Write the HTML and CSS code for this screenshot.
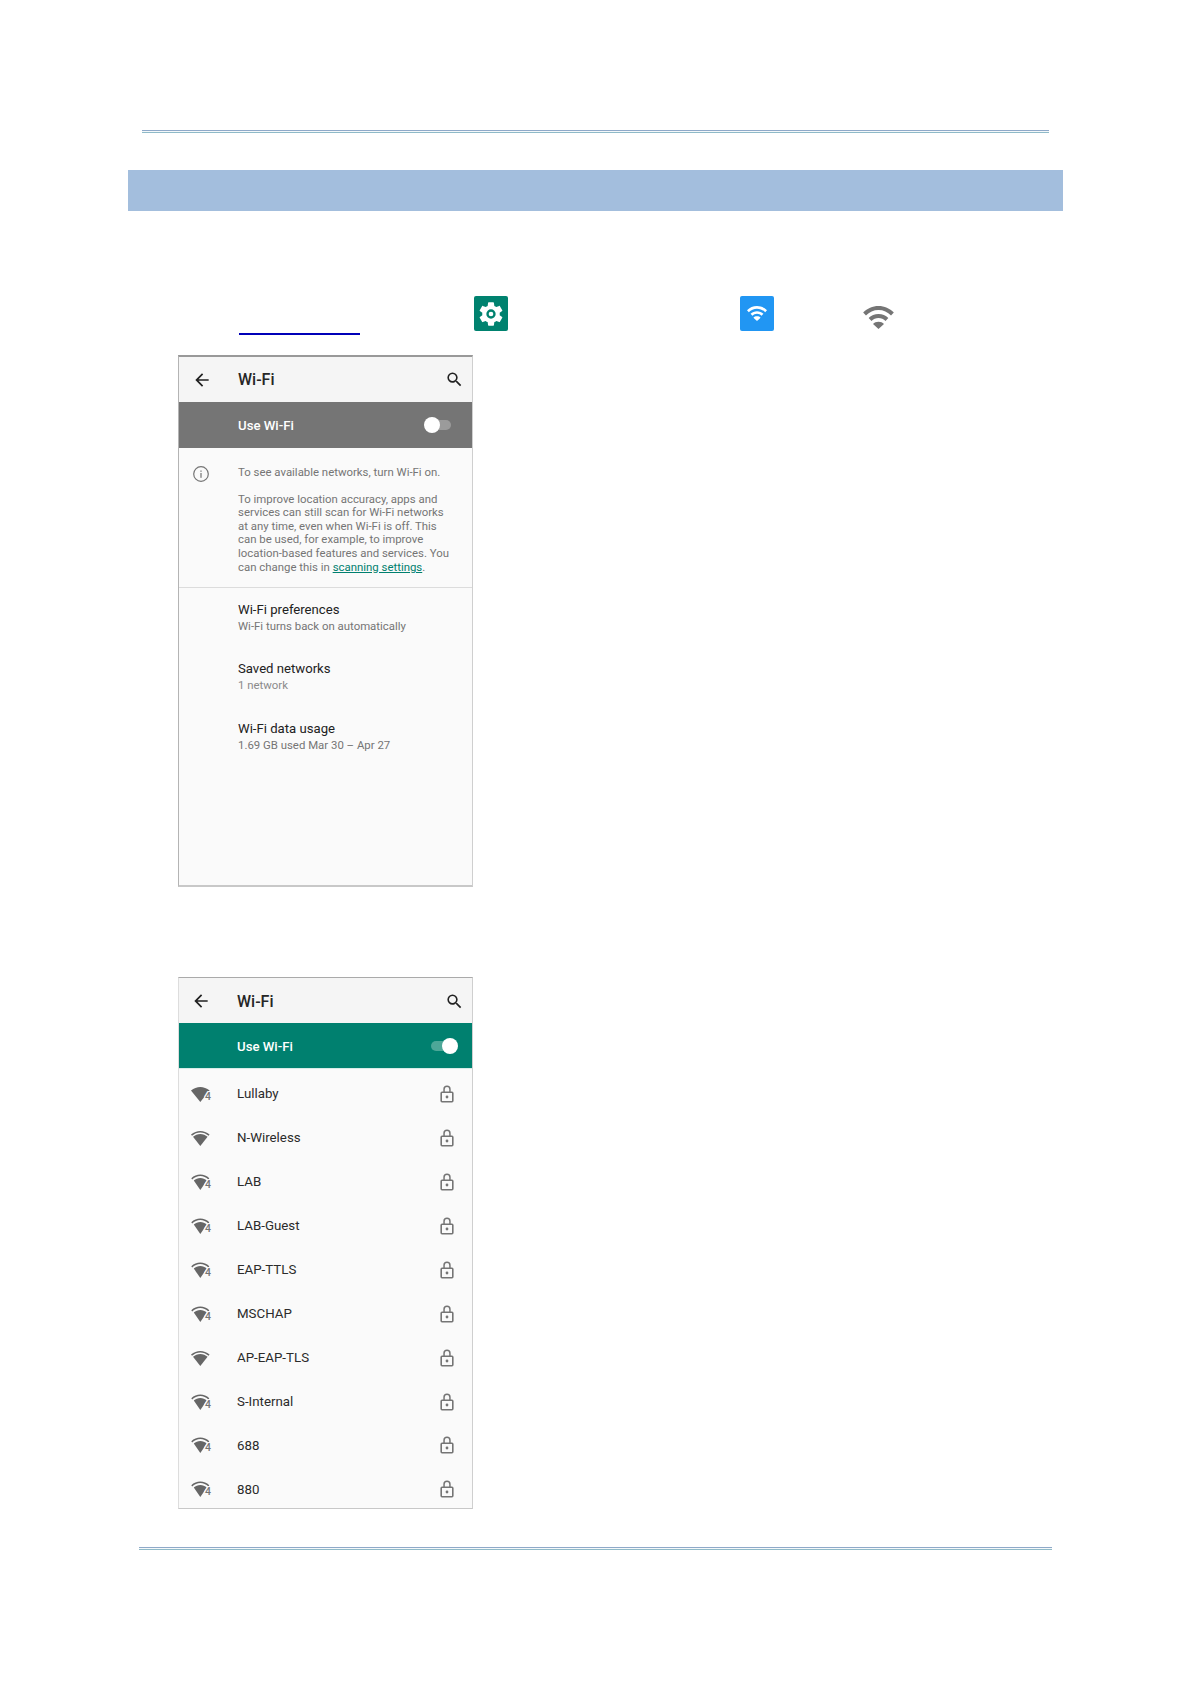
FILE: index.html
```html
<!DOCTYPE html>
<html lang="en">
<head>
<meta charset="utf-8">
<title>Wi-Fi</title>
<link rel="stylesheet" href="styles.css">
</head>
<body>
<svg class="defs" width="0" height="0" aria-hidden="true">
  <defs>
    <symbol id="i-back" viewBox="0 0 24 24"><path d="M20 11H7.83l5.59-5.59L12 4l-8 8 8 8 1.41-1.41L7.83 13H20v-2z"/></symbol>
    <symbol id="i-search" viewBox="0 0 24 24"><path d="M15.5 14h-.79l-.28-.27A6.47 6.47 0 0 0 16 9.5 6.5 6.5 0 1 0 9.5 16c1.61 0 3.09-.59 4.23-1.57l.27.28v.79l5 4.99L20.49 19l-4.99-5zm-6 0C7.01 14 5 11.99 5 9.5S7.01 5 9.5 5 14 7.01 14 9.5 11.99 14 9.5 14z"/></symbol>
    <symbol id="i-lock" viewBox="0 0 14 18"><path d="M7 .6a3.7 3.7 0 0 0-3.7 3.7v2.3H2a1.6 1.6 0 0 0-1.6 1.6v7.6A1.6 1.6 0 0 0 2 17.4h10a1.6 1.6 0 0 0 1.6-1.6V8.2A1.6 1.6 0 0 0 12 6.6h-1.3V4.3A3.7 3.7 0 0 0 7 .6zm0 1.5a2.2 2.2 0 0 1 2.2 2.2v2.3H4.8V4.3A2.2 2.2 0 0 1 7 2.1zM2 8.1h10v7.8H2V8.1z"/><circle cx="7" cy="12" r="1.4"/></symbol>
    <symbol id="i-full" viewBox="0 0 20 16"><path d="M0 4.6C2.8 2.2 6 1 9.300 1c3.200 0 6.500 1.200 9.300 3.600L9.300 16z"/></symbol>
    <symbol id="i-mid" viewBox="0 0 20 16"><path d="M9.300 1C6 1 2.800 2.200 0 4.600l1 1.200C3.500 3.700 6.300 2.500 9.300 2.500s5.800 1.200 8.300 3.300l1-1.200C15.800 2.200 12.600 1 9.300 1z"/><path d="M2 6.800C4 5 6.600 3.900 9.300 3.900s5.300 1.100 7.300 2.900L9.300 16z"/></symbol>
    <symbol id="i-low" viewBox="0 0 20 16"><path d="M9.300 .6C6 .6 2.800 1.800 .3 4.200L1.200 5.400C3.500 3.200 6.300 1.900 9.300 1.900s5.800 1.300 8.100 3.500l.9-1.200C15.800 1.800 12.600 .6 9.300 .6z"/><path d="M2.800 6.600C4.600 5 6.900 4.100 9.300 4.100s4.700.9 6.500 2.500L9.300 16z"/></symbol>
    <symbol id="i-wifi" viewBox="0 0 24 18"><path d="M12 0C7.300 0 3.200 1.900 0 5l2.200 2.400C4.800 4.800 8.200 3.200 12 3.200s7.200 1.600 9.800 4.200L24 5C20.800 1.900 16.700 0 12 0z"/><path d="M12 6.200c-3 0-5.700 1.200-7.700 3.200l2.200 2.400c1.400-1.500 3.400-2.400 5.500-2.400s4.100.9 5.500 2.400l2.200-2.400c-2-2-4.700-3.200-7.700-3.200z"/><path d="M12 12.400c-1.800 0-3.200.6-4.300 1.600L12 18l4.300-4c-1.100-1-2.500-1.600-4.300-1.600z"/></symbol>
  </defs>
</svg>

<div class="page">
  <div class="rule rule-top"></div>
  <div class="band"></div>

  <div class="icon-line">
    <span class="link-line"></span>
    <span class="app-tile tile-settings">
      <svg class="tile-glyph" viewBox="0 0 24 24"><path fill-rule="evenodd" d="M19.430 12.980c.04-.32.07-.64.07-.98s-.03-.66-.07-.98l2.110-1.650c.19-.15.24-.42.12-.64l-2-3.460c-.12-.22-.39-.3-.61-.22l-2.490 1c-.52-.4-1.080-.73-1.690-.98l-.38-2.650A.49.49 0 0 0 14 2h-4c-.25 0-.46.18-.49.42l-.38 2.650c-.61.25-1.170.59-1.690.98l-2.490-1c-.23-.09-.49 0-.61.22l-2 3.460c-.13.22-.07.49.12.64l2.110 1.650c-.04.32-.07.65-.07.98s.03.66.07.98l-2.110 1.650c-.19.15-.24.42-.12.64l2 3.460c.12.22.39.3.61.22l2.490-1c.52.4 1.080.73 1.690.98l.38 2.650c.03.24.24.42.49.42h4c.25 0 .46-.18.49-.42l.38-2.650c.61-.25 1.170-.59 1.690-.98l2.490 1c.23.09.49 0 .61-.22l2-3.460c.12-.22.07-.49-.12-.64l-2.110-1.650zM12 16a4 4 0 1 1 0-8 4 4 0 0 1 0 8zm0-2a2 2 0 1 0 0-4 2 2 0 0 0 0 4z"/></svg>
    </span>
    <span class="app-tile tile-wifi">
      <svg class="tile-wifi-glyph"><use href="#i-wifi"/></svg>
    </span>
    <svg class="status-wifi"><use href="#i-wifi"/></svg>
  </div>

  <section class="screen screen-off">
    <header class="appbar">
      <svg class="ic-back"><use href="#i-back"/></svg>
      <span class="appbar-title">Wi-Fi</span>
      <svg class="ic-search"><use href="#i-search"/></svg>
    </header>
    <div class="master master-off">
      <span class="master-label">Use Wi-Fi</span>
      <span class="toggle toggle-off"><span class="knob"></span></span>
    </div>
    <div class="info">
      <svg class="ic-info" viewBox="0 0 16 16"><circle cx="8" cy="8" r="7.300" fill="none" stroke="#757575" stroke-width="1.200"/><rect x="7.400" y="7" width="1.200" height="4.800" fill="#757575"/><rect x="7.400" y="4.500" width="1.200" height="1.300" fill="#757575"/></svg>
      <div class="info-text">
        <p>To see available networks, turn Wi-Fi on.</p>
        <p>To improve location accuracy, apps and services can still scan for Wi-Fi networks at any time, even when Wi-Fi is off. This can be used, for example, to improve location-based features and services. You can change this in <a class="info-link">scanning settings</a>.</p>
      </div>
    </div>
    <div class="pref"><span class="pref-title">Wi-Fi preferences</span><span class="pref-sub">Wi-Fi turns back on automatically</span></div>
    <div class="pref"><span class="pref-title">Saved networks</span><span class="pref-sub sub-light">1 network</span></div>
    <div class="pref"><span class="pref-title">Wi-Fi data usage</span><span class="pref-sub">1.69 GB used Mar 30 – Apr 27</span></div>
  </section>

  <section class="screen screen-on">
    <header class="appbar">
      <svg class="ic-back"><use href="#i-back"/></svg>
      <span class="appbar-title">Wi-Fi</span>
      <svg class="ic-search"><use href="#i-search"/></svg>
    </header>
    <div class="master master-on">
      <span class="master-label">Use Wi-Fi</span>
      <span class="toggle toggle-on"><span class="knob"></span></span>
    </div>
    <ul class="networks">
      <li class="net"><span class="sig"><svg class="sig-icon"><use href="#i-full"/></svg><span class="sig-gen">4</span></span><span class="net-name">Lullaby</span><svg class="ic-lock"><use href="#i-lock"/></svg></li>
      <li class="net"><span class="sig"><svg class="sig-icon"><use href="#i-mid"/></svg></span><span class="net-name">N-Wireless</span><svg class="ic-lock"><use href="#i-lock"/></svg></li>
      <li class="net"><span class="sig"><svg class="sig-icon"><use href="#i-low"/></svg><span class="sig-gen">4</span></span><span class="net-name">LAB</span><svg class="ic-lock"><use href="#i-lock"/></svg></li>
      <li class="net"><span class="sig"><svg class="sig-icon"><use href="#i-low"/></svg><span class="sig-gen">4</span></span><span class="net-name">LAB-Guest</span><svg class="ic-lock"><use href="#i-lock"/></svg></li>
      <li class="net"><span class="sig"><svg class="sig-icon"><use href="#i-low"/></svg><span class="sig-gen">4</span></span><span class="net-name">EAP-TTLS</span><svg class="ic-lock"><use href="#i-lock"/></svg></li>
      <li class="net"><span class="sig"><svg class="sig-icon"><use href="#i-low"/></svg><span class="sig-gen">4</span></span><span class="net-name">MSCHAP</span><svg class="ic-lock"><use href="#i-lock"/></svg></li>
      <li class="net"><span class="sig"><svg class="sig-icon"><use href="#i-mid"/></svg></span><span class="net-name">AP-EAP-TLS</span><svg class="ic-lock"><use href="#i-lock"/></svg></li>
      <li class="net"><span class="sig"><svg class="sig-icon"><use href="#i-low"/></svg><span class="sig-gen">4</span></span><span class="net-name">S-Internal</span><svg class="ic-lock"><use href="#i-lock"/></svg></li>
      <li class="net"><span class="sig"><svg class="sig-icon"><use href="#i-low"/></svg><span class="sig-gen">4</span></span><span class="net-name">688</span><svg class="ic-lock"><use href="#i-lock"/></svg></li>
      <li class="net"><span class="sig"><svg class="sig-icon"><use href="#i-low"/></svg><span class="sig-gen">4</span></span><span class="net-name">880</span><svg class="ic-lock"><use href="#i-lock"/></svg></li>
    </ul>
  </section>

  <div class="rule rule-bottom"></div>
</div>
</body>
</html>
```

FILE: styles.css
```css
* { box-sizing: border-box; }
html, body { margin: 0; padding: 0; background: #fff; }
body { font-family: Roboto, "Liberation Sans", sans-serif; color: #212121; }
.defs { display: block; height: 0; }
.page { width: 1191px; height: 1683px; overflow: hidden; padding-top: 130px; }

.rule { height: 3px; border-top: 1px solid #8fa9c9; border-bottom: 1px solid #8fbac8; background: #f4f8fa; }
.rule-top { margin: 0 142px 0 142px; width: 907px; }
.rule-bottom { margin: 38px 0 0 139px; width: 913px; }

.band { margin: 37px 0 0 128px; width: 935px; height: 41px; background: #a3bedd; }

.icon-line { display: flex; height: 39px; margin-top: 85px; padding-left: 239px; }
.link-line { width: 121px; height: 2px; margin-top: 37px; background: #0000b8; }
.app-tile { width: 34px; height: 35px; border-radius: 2px; display: flex; align-items: center; justify-content: center; }
.tile-settings { margin-left: 114px; background: #00826f; }
.tile-wifi { margin-left: 232px; background: #2196f3; }
.tile-glyph { width: 28px; height: 28px; fill: #fff; }
.tile-wifi-glyph { width: 20px; height: 15px; fill: #fff; }
.status-wifi { width: 31px; height: 23px; margin: 10px 0 0 89px; fill: #757575; }

.screen { width: 295px; height: 532px; margin-left: 178px; background: #fafafa; display: flex; flex-direction: column; overflow: hidden; border-left: 1px solid #b4b4b4; border-right: 1px solid #cfcfcf; border-bottom: 2px solid #c8c8c8; }
.screen-off { margin-top: 20px; border-top: 2px solid #999; }
.screen-on { margin-top: 90px; border-top: 1px solid #aaa; border-left-color: #ddd; border-bottom-width: 1px; }

.appbar { flex: 0 0 45px; display: flex; align-items: center; background: #f5f5f5; padding: 0 8px 0 13px; }
.ic-back { width: 20px; height: 20px; fill: #212121; }
.appbar-title { margin-left: 26px; font-size: 16px; font-weight: 500; color: #262626; }
.ic-search { width: 19px; height: 19px; margin-left: auto; fill: #212121; }
.screen-on .ic-back { margin-left: -1px; }
.screen-on .appbar { padding-top: 1px; }

.master { flex: 0 0 46px; display: flex; align-items: center; justify-content: space-between; padding-left: 59px; }
.master-off { background: #757575; }
.master-on { background: #00806f; padding-left: 58px; padding-top: 1px; border-bottom: 1px solid #d7ece8; }
.master-label { color: #fff; font-size: 13.200px; font-weight: 500; }
.toggle { position: relative; display: block; width: 26px; height: 10px; border-radius: 5px; }
.knob { position: absolute; top: -3px; width: 16px; height: 16px; border-radius: 50%; background: #fff; }
.toggle-off { background: #9b9b9b; margin-right: 21px; }
.toggle-off .knob { left: -1px; }
.toggle-on { background: #4da798; margin-right: 15px; }
.toggle-on .knob { right: -1px; }

.info { flex: 0 0 139px; display: flex; padding: 18px 0 0 14px; border-bottom: 1px solid #dcdcdc; }
.ic-info { flex: none; width: 16px; height: 16px; margin: 0; }
.info-text { margin-left: 29px; width: 216px; color: #757575; font-size: 11.400px; line-height: 13.600px; }
.info-text p { margin: 0 0 13px; }
.info-link { color: #00806f; text-decoration: underline; }

.pref { flex: 0 0 59.500px; display: flex; flex-direction: column; justify-content: center; padding-left: 59px; }
.pref-title { font-size: 13.150px; line-height: 17px; color: #212121; }
.pref-sub { font-size: 11.400px; line-height: 17px; color: #757575; }
.sub-light { color: #8a8a8a; }

.networks { list-style: none; margin: 3px 0 0; padding: 0; }
.net { height: 43.950px; display: flex; align-items: center; padding-left: 12px; }
.sig { position: relative; flex: none; width: 20px; height: 16px; margin-right: 26px; }
.sig-icon { display: block; width: 20px; height: 16px; fill: #666; }
.sig-gen { position: absolute; right: 0; bottom: 0; font-size: 10.500px; font-weight: 500; line-height: 10px; color: #757575; text-shadow: -1px 0 0 #fafafa, 0 -1px 0 #fafafa, -1px -1px 0 #fafafa; }
.net-name { font-size: 13.300px; color: #2b2b2b; }
.ic-lock { width: 14px; height: 18px; margin-left: auto; margin-right: 18px; fill: #757575; }
```
